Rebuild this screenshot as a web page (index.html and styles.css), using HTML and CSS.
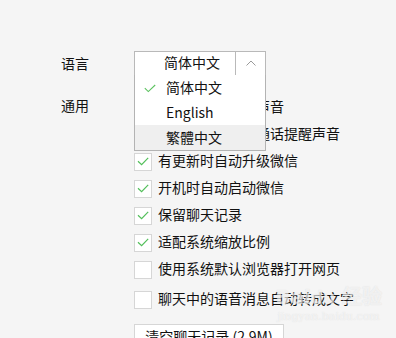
FILE: index.html
```html
<!DOCTYPE html>
<html lang="zh-CN">
<head>
    <meta http-equiv="content-type" content="text/html; charset=utf-8" />
    <title>设置 - 通用设置</title>
<link rel="stylesheet" href="styles.css">
</head>
<body>
<div class="settings">
    <div class="field lang">
        <div class="label">语言</div>
        <div class="combo">
            <div class="combo-value">简体中文</div>
            <div class="combo-arrow">
                <svg width="10" height="6" viewBox="0 0 10 6"><polyline points="0.5,5.5 5,1 9.5,5.5" fill="none" stroke="#9a9a9a" stroke-width="1"/></svg>
            </div>
            <ul class="dropdown">
                <li class="selected">
                    <svg class="tick" width="12" height="9" viewBox="0 0 12 9"><polyline points="0.8,4.2 4.3,7.6 11.2,1" fill="none" stroke="#5bc25f" stroke-width="1.1"/></svg>
                    简体中文
                </li>
                <li>English</li>
                <li class="hover">繁體中文</li>
            </ul>
        </div>
    </div>

    <div class="field general">
        <div class="label">通用</div>
        <div class="options">
            <div class="option"><span class="box checked"></span><span class="text">开启新消息提醒声音</span></div>
            <div class="option"><span class="box checked"></span><span class="text">开启语音和视频通话提醒声音</span></div>
            <div class="option"><span class="box checked"></span><span class="text">有更新时自动升级微信</span></div>
            <div class="option"><span class="box checked"></span><span class="text">开机时自动启动微信</span></div>
            <div class="option"><span class="box checked"></span><span class="text">保留聊天记录</span></div>
            <div class="option"><span class="box checked"></span><span class="text">适配系统缩放比例</span></div>
            <div class="option"><span class="box"></span><span class="text">使用系统默认浏览器打开网页</span></div>
            <div class="option last"><span class="box"></span><span class="text">聊天中的语音消息自动转成文字</span></div>
            <div class="btn">清空聊天记录 (2.9M)</div>
        </div>
    </div>
</div>

<div class="watermark">
    <div class="wm-logo">Bai<span>du</span> 经验</div>
    <div class="wm-url">jingyan.baidu.com</div>
</div>
</body>
</html>
```

FILE: styles.css
```css
html, body {
  margin: 0;
  padding: 0;
  height: 100%;
}
body {
  background: #f5f5f5;
  color: #111;
  font-family: "Noto Sans CJK SC", "Noto Sans", sans-serif;
  font-size: 14px;
  overflow: hidden;
  position: relative;
}
.settings {
  padding: 51px 0 0 61px;
}
.field {
  display: flex;
}
.label {
  width: 73px;
  flex: none;
  line-height: 25px;
}
.lang {
  align-items: flex-start;
}

/* language combo box */
.combo {
  position: relative;
  display: flex;
  width: 132px;
  height: 25px;
  box-sizing: border-box;
  border: 1px solid #b9b9b9;
  background: #fff;
}
.combo-value {
  flex: 1;
  padding-left: 29px;
  line-height: 21px;
  border-right: 1px solid #b9b9b9;
}
.combo-arrow {
  width: 29px;
  display: flex;
  align-items: center;
  justify-content: center;
  padding-bottom: 2px;
}
.dropdown {
  position: absolute;
  top: 100%;
  left: -1px;
  right: -1px;
  margin: 0;
  padding: 0;
  list-style: none;
  background: #fff;
  border: 1px solid #b3b3b3;
  border-top: none;
  z-index: 5;
}
.dropdown li {
  position: relative;
  height: 25px;
  line-height: 25px;
  padding-left: 31px;
}
.dropdown li.hover {
  background: #efefef;
}
.dropdown .tick {
  position: absolute;
  left: 9px;
  top: 9px;
}

/* general options */
.general {
  margin-top: 18px;
}
.general .label {
  line-height: 23px;
}
.options {
  display: flex;
  flex-direction: column;
  align-items: flex-start;
}
.option {
  display: flex;
  align-items: center;
  height: 27px;
  white-space: nowrap;
}
.option .text {
  line-height: 20px;
  padding-bottom: 3px;
}
.option.last {
  margin-top: 3px;
}
.box {
  width: 18px;
  height: 18px;
  box-sizing: border-box;
  border: 1px solid #d6d6d6;
  background: #fff;
  margin-right: 6px;
  flex: none;
}
.box.checked {
  background: #fff url("data:image/svg+xml,%3Csvg xmlns='http://www.w3.org/2000/svg' width='18' height='18'%3E%3Cpolyline points='4,8.2 7.6,11.6 14.2,4.8' fill='none' stroke='%2352bf5a' stroke-width='1.2'/%3E%3C/svg%3E") no-repeat center;
}
.btn {
  margin-top: 11px;
  width: 150px;
  height: 27px;
  box-sizing: border-box;
  border: 1px solid #d6d6d6;
  background: #fff;
  line-height: 23px;
  text-align: center;
  white-space: nowrap;
}

/* baidu jingyan watermark */
.watermark {
  position: absolute;
  right: 14px;
  top: 286px;
  color: rgba(255, 255, 255, 0.6);
  text-shadow: 0 0 1px rgba(140, 140, 140, 0.25);
  font-family: "DejaVu Sans", sans-serif;
  text-align: center;
  pointer-events: none;
}
.wm-logo {
  font-size: 20px;
  font-weight: bold;
  line-height: 22px;
}
.wm-logo span {
  font-size: 17px;
}
.wm-url {
  font-size: 11px;
  line-height: 16px;
  font-family: "DejaVu Serif", serif;
}
```
